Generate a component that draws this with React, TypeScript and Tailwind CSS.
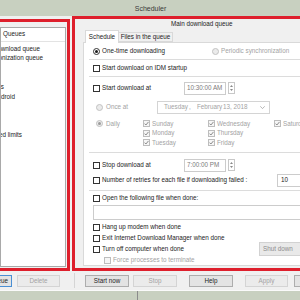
import React from "react";

function Check({ checked = false, disabled = false }: { checked?: boolean; disabled?: boolean }) {
  return (
    <span
      className={`shrink-0 w-[7px] h-[7px] border flex items-center justify-center ${
        disabled ? "border-[#bdbdbd] bg-[#f6f6f6]" : "border-[#333333] bg-white"
      }`}
    >
      {checked && (
        <svg width="5" height="5" viewBox="0 0 5 5">
          <path d="M0.5 2.6 L1.9 4 L4.5 0.9" fill="none" stroke={disabled ? "#7f7f7f" : "#222"} strokeWidth="0.9" />
        </svg>
      )}
    </span>
  );
}

function Radio({ checked = false, disabled = false }: { checked?: boolean; disabled?: boolean }) {
  return (
    <span
      className={`shrink-0 w-[7px] h-[7px] rounded-full border flex items-center justify-center ${
        disabled ? "border-[#c2c2c2] bg-[#ebebeb]" : "border-[#333333] bg-white"
      }`}
    >
      {checked && <span className={`w-[3px] h-[3px] rounded-full ${disabled ? "bg-[#9a9a9a]" : "bg-[#1a1a1a]"}`} />}
    </span>
  );
}

function Spinner() {
  return (
    <span className="shrink-0 ml-[2px] w-[7px] h-[12px] border border-[#c8c8c8] bg-white flex flex-col items-center justify-center gap-[2px]">
      <svg width="3" height="2" viewBox="0 0 3 2">
        <path d="M0 2 L1.5 0 L3 2 Z" fill="#8a8a8a" />
      </svg>
      <svg width="3" height="2" viewBox="0 0 3 2">
        <path d="M0 0 L1.5 2 L3 0 Z" fill="#8a8a8a" />
      </svg>
    </span>
  );
}

function Sep() {
  return <div className="shrink-0 ml-[5px] w-[240px] h-px bg-[#dcdcdc]" />;
}

function Btn({ children, disabled = false, cls = "" }: { children: React.ReactNode; disabled?: boolean; cls?: string }) {
  return (
    <div
      className={`shrink-0 h-[12px] border flex items-center justify-center whitespace-nowrap ${
        disabled ? "border-[#d4d4d4] bg-[#ebebeb] text-[#a3a3a3]" : "border-[#adadad] bg-[#e3e3e3] text-[#1e1e1e]"
      } ${cls}`}
    >
      {children}
    </div>
  );
}

function Item({ text, w }: { text: string; w: string }) {
  return (
    <div className={`h-[9.6px] shrink-0 flex items-center justify-end ${w}`}>
      <span className="shrink-0 whitespace-nowrap">{text}</span>
    </div>
  );
}

export default function App() {
  return (
    <div className="w-[300px] h-[300px] overflow-hidden bg-[#f0f0f0] flex flex-col text-[#222222] text-[6.3px] leading-none font-['Liberation_Sans',Arial,sans-serif]">
      {/* title bar */}
      <div className="h-[16px] shrink-0 bg-[#c8d0c0] flex items-center justify-center pl-[1px]">
        <span className="text-[7px] text-[#3a3a3a]">Scheduler</span>
      </div>

      {/* main */}
      <div className="h-[255px] shrink-0 flex">
        {/* left queues panel */}
        <div className="shrink-0 ml-[-3px] mt-[3px] w-[73px] h-[252px] border-[3px] border-[#de1f2c] flex flex-col pt-[5px] pr-[1px] pb-[1px]">
          <div className="flex-1 border border-[#a9a9a9] bg-white flex flex-col overflow-hidden">
            <div className="h-[14px] shrink-0 border-b border-[#e3e3e3] flex items-center pl-[2px]">Queues</div>
            <div className="flex flex-col pt-[2.2px]">
              <Item text="Main download queue" w="w-[39px]" />
              <Item text="Synchronization queue" w="w-[42px]" />
              <Item text="" w="w-[10px]" />
              <Item text="" w="w-[10px]" />
              <Item text="Extensions" w="w-[3px]" />
              <Item text="Android" w="w-[14px]" />
              <Item text="" w="w-[10px]" />
              <Item text="" w="w-[10px]" />
              <Item text="" w="w-[10px]" />
              <Item text="Speed limits" w="w-[21px]" />
            </div>
          </div>
        </div>

        {/* right schedule panel */}
        <div className="shrink-0 ml-[2px] w-[240px] h-[255px] border-[3px] border-[#de1f2c] flex flex-col">
          <div className="h-[10px] shrink-0 flex items-center pl-[96px] whitespace-nowrap">Main download queue</div>
          <div className="h-[13px] shrink-0 flex items-end pl-[10px] relative z-10">
            <div className="shrink-0 w-[34px] h-[13px] mb-[-1px] bg-white border border-b-0 border-[#d9d9d9] flex items-center justify-center">
              Schedule
            </div>
            <div className="shrink-0 w-[54px] h-[10px] bg-[#f0f0f0] border border-l-0 border-[#d9d9d9] flex items-center justify-center whitespace-nowrap">
              Files in the queue
            </div>
          </div>
          <div className="shrink-0 ml-[8px] w-[230px] h-[224px] border border-[#d9d9d9] bg-white flex flex-col">
            {/* row A */}
            <div className="h-[16px] shrink-0 flex items-center pl-[9px] whitespace-nowrap">
              <div className="w-[119px] shrink-0 flex items-center gap-[2px]">
                <Radio checked />
                <span>One-time downloading</span>
              </div>
              <div className="shrink-0 flex items-center gap-[2px] text-[#a3a3a3]">
                <Radio disabled />
                <span>Periodic synchronization</span>
              </div>
            </div>
            <Sep />
            {/* row B */}
            <div className="h-[16px] shrink-0 flex items-center pl-[9px] gap-[2px] whitespace-nowrap">
              <Check />
              <span>Start download on IDM startup</span>
            </div>
            <Sep />
            {/* row C */}
            <div className="h-[22px] shrink-0 flex items-center pl-[9px] whitespace-nowrap">
              <div className="w-[91px] shrink-0 flex items-center gap-[2px]">
                <Check />
                <span>Start download at</span>
              </div>
              <div className="shrink-0 w-[42px] h-[13px] border border-[#cccccc] bg-white flex items-center pl-[2px] text-[#7a7a7a]">
                10:30:00 AM
              </div>
              <Spinner />
            </div>
            {/* row D */}
            <div className="h-[16px] shrink-0 flex items-center pl-[12px] whitespace-nowrap text-[#a3a3a3]">
              <div className="w-[61px] shrink-0 flex items-center gap-[3px]">
                <Radio disabled />
                <span>Once at</span>
              </div>
              <div className="shrink-0 w-[113px] h-[13px] border border-[#d4d4d4] bg-white flex items-center pl-[6px] pr-[4px]">
                <span className="shrink-0 w-[25px]">Tuesday</span>
                <span className="shrink-0 w-[8px]">,</span>
                <span className="shrink-0 w-[26px]">February</span>
                <span className="shrink-0">13, 2018</span>
                <svg className="ml-auto" width="5" height="3" viewBox="0 0 5 3">
                  <path d="M0.3 0.3 L2.5 2.6 L4.7 0.3" fill="none" stroke="#9a9a9a" strokeWidth="0.7" />
                </svg>
              </div>
            </div>
            {/* days */}
            <div className="mt-[4px] shrink-0 flex pl-[12px] whitespace-nowrap text-[#a3a3a3]">
              <div className="w-[47px] shrink-0 flex flex-col">
                <div className="h-[9.5px] flex items-center gap-[3px]">
                  <Radio checked disabled />
                  <span>Daily</span>
                </div>
              </div>
              <div className="w-[65px] shrink-0 flex flex-col">
                {["Sunday", "Monday", "Tuesday"].map((d) => (
                  <div key={d} className="h-[9.5px] flex items-center gap-[2px]">
                    <Check checked disabled />
                    <span>{d}</span>
                  </div>
                ))}
              </div>
              <div className="w-[66px] shrink-0 flex flex-col">
                {["Wednesday", "Thursday", "Friday"].map((d) => (
                  <div key={d} className="h-[9.5px] flex items-center gap-[2px]">
                    <Check checked disabled />
                    <span>{d}</span>
                  </div>
                ))}
              </div>
              <div className="shrink-0 flex flex-col">
                <div className="h-[9.5px] flex items-center gap-[2px]">
                  <Check checked disabled />
                  <span>Saturday</span>
                </div>
              </div>
            </div>
            <div className="mt-[4.5px]" />
            <Sep />
            {/* row F */}
            <div className="mt-[4px] h-[16px] shrink-0 flex items-center pl-[9px] whitespace-nowrap">
              <div className="w-[91px] shrink-0 flex items-center gap-[2px]">
                <Check />
                <span>Stop download at</span>
              </div>
              <div className="shrink-0 w-[42px] h-[13px] border border-[#cccccc] bg-white flex items-center pl-[2px] text-[#7a7a7a]">
                7:00:00 PM
              </div>
              <Spinner />
            </div>
            {/* row G */}
            <div className="h-[14px] shrink-0 flex items-center pl-[9px] whitespace-nowrap">
              <div className="w-[184px] shrink-0 flex items-center gap-[2px]">
                <Check />
                <span>Number of retries for each file if downloading failed :</span>
              </div>
              <div className="shrink-0 w-[40px] h-[13px] border border-[#cccccc] bg-white flex items-center pl-[3px]">10</div>
            </div>
            <div className="mt-[3px]" />
            <Sep />
            {/* row H */}
            <div className="h-[14px] shrink-0 flex items-center pl-[9px] gap-[2px] whitespace-nowrap">
              <Check />
              <span>Open the following file when done:</span>
            </div>
            <div className="shrink-0 ml-[9px] w-[220px] h-[15px] border border-[#cccccc] bg-white" />
            <div className="mt-[1.5px]" />
            <div className="h-[11px] shrink-0 flex items-center pl-[9px] gap-[2px] whitespace-nowrap">
              <Check />
              <span>Hang up modem when done</span>
            </div>
            <div className="h-[11px] shrink-0 flex items-center pl-[9px] gap-[2px] whitespace-nowrap">
              <Check />
              <span>Exit Internet Download Manager when done</span>
            </div>
            <div className="h-[11px] shrink-0 flex items-center pl-[9px] whitespace-nowrap">
              <div className="w-[166px] shrink-0 flex items-center gap-[2px]">
                <Check />
                <span>Turn off computer when done</span>
              </div>
              <div className="shrink-0 w-[50px] h-[14px] bg-[#e9e9e9] border border-[#d2d2d2] flex items-center pl-[3px] text-[#8c8c8c]">
                Shut down
              </div>
            </div>
            <div className="h-[11px] shrink-0 flex items-center pl-[20px] gap-[2px] whitespace-nowrap text-[#a3a3a3]">
              <Check disabled />
              <span>Force processes to terminate</span>
            </div>
          </div>
        </div>
      </div>

      {/* buttons */}
      <div className="h-[12px] mt-[4px] shrink-0 flex items-start">
        <Btn cls="ml-[-28px] w-[40px] !border-[#4a8fd4]">New queue</Btn>
        <Btn disabled cls="ml-[5px] w-[43px]">Delete</Btn>
        <div className="shrink-0 ml-[14px] mt-[-2px] w-px h-[15px] bg-[#d5d5d5]" />
        <Btn cls="ml-[10px] w-[44px]">Start now</Btn>
        <Btn disabled cls="ml-[4px] w-[44px]">Stop</Btn>
        <Btn cls="ml-[12px] w-[44px]">Help</Btn>
        <Btn disabled cls="ml-[12px] w-[43px]">Apply</Btn>
        <Btn cls="ml-[6px] w-[44px]">Close</Btn>
      </div>

      {/* bottom strip */}
      <div className="mt-[3px] h-[10px] shrink-0 border-t border-[#fafafa] bg-[#c8d0c0] flex">
        <div className="ml-[137px] w-px h-full bg-[#8c8c8c]" />
      </div>
    </div>
  );
}
